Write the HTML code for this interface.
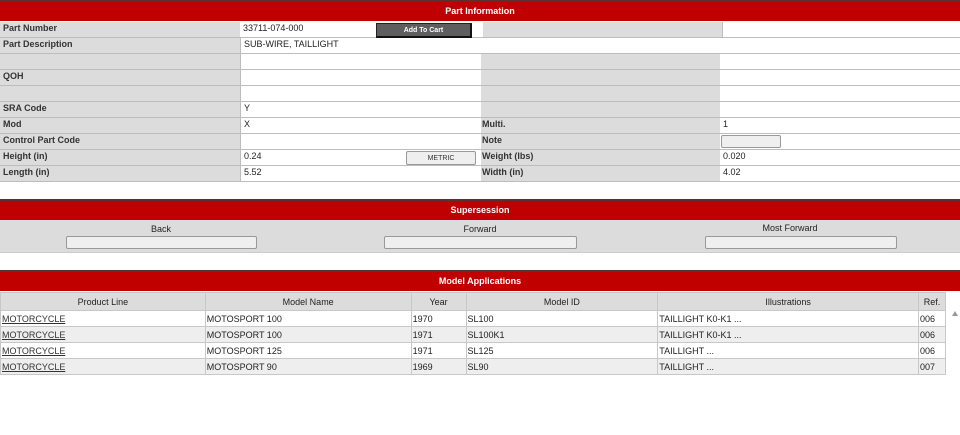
<!DOCTYPE html>
<html><head><style>
*{margin:0;padding:0;box-sizing:border-box}
body{width:960px;height:435px;background:#fff;font-family:"Liberation Sans",sans-serif;font-size:9px;color:#222;position:relative;overflow:hidden}
.a{position:absolute}
.hd{position:absolute;left:0;width:960px;height:21px;background:#c00000;border-top:2px solid #5a3030;color:#fff;font-weight:bold;text-align:center;font-size:9px;line-height:18px}
.g{background:#dcdcdc}
.w{background:#fff}
.c{position:absolute;height:16px;border-bottom:1px solid #bdbdbd;padding:1px 0 0 3px;line-height:10px}
.l{font-weight:bold;color:#333}
.btn{position:absolute;border:1px solid #999;border-radius:2px;background:#efefef;font-size:7px;text-align:center;line-height:13px;color:#333}
table{position:absolute;left:0;top:292px;border-collapse:collapse;width:946px;font-size:9px}
td,th{border:1px solid #c8c8c8;height:16px;padding:0 1px;text-align:left;font-weight:normal;color:#222;line-height:10px}
th{background:#dcdcdc;text-align:center;height:18px}
tr.e td{background:#eeeeee}
u{color:#333}
</style></head><body>
<div class="hd" style="top:0">Part Information</div>
<div class="c g l" style="left:0;top:22px;width:240px">Part Number</div>
<div class="c w" style="left:240px;top:22px;width:243px">33711-074-000</div>
<div class="a" style="left:376px;top:23px;width:96px;height:15px;background:#5e5e5e;border:1px solid #222;border-right:2px solid #111;border-bottom:2px solid #111;color:#fff;font-size:7px;text-align:center;line-height:14px;font-weight:bold">Add To Cart</div>
<div class="c g" style="left:483px;top:22px;width:239px"></div>
<div class="c w" style="left:722px;top:22px;width:238px;border-left:1px solid #bdbdbd"></div>
<div class="c g l" style="left:0;top:38px;width:240px">Part Description</div>
<div class="c w" style="left:240px;top:38px;width:720px;border-left:1px solid #bdbdbd">SUB-WIRE, TAILLIGHT</div>
<div class="c g l" style="left:0;top:54px;width:240px"></div>
<div class="c g l" style="left:0;top:70px;width:240px">QOH</div>
<div class="c g l" style="left:0;top:86px;width:240px"></div>
<div class="c g l" style="left:0;top:102px;width:240px">SRA Code</div>
<div class="c g l" style="left:0;top:118px;width:240px">Mod</div>
<div class="c g l" style="left:0;top:134px;width:240px">Control Part Code</div>
<div class="c g l" style="left:0;top:150px;width:240px">Height (in)</div>
<div class="c g l" style="left:0;top:166px;width:240px">Length (in)</div>
<div class="c w" style="left:240px;top:54px;width:241px;border-left:1px solid #bdbdbd"></div>
<div class="c w" style="left:240px;top:70px;width:241px;border-left:1px solid #bdbdbd"></div>
<div class="c w" style="left:240px;top:86px;width:241px;border-left:1px solid #bdbdbd"></div>
<div class="c w" style="left:240px;top:102px;width:241px;border-left:1px solid #bdbdbd">Y</div>
<div class="c w" style="left:240px;top:118px;width:241px;border-left:1px solid #bdbdbd">X</div>
<div class="c w" style="left:240px;top:134px;width:241px;border-left:1px solid #bdbdbd"></div>
<div class="c w" style="left:240px;top:150px;width:241px;border-left:1px solid #bdbdbd">0.24</div>
<div class="c w" style="left:240px;top:166px;width:241px;border-left:1px solid #bdbdbd">5.52</div>
<div class="btn" style="left:406px;top:151px;width:70px;height:14px">METRIC</div>
<div class="c g l" style="left:481px;top:54px;width:239px"></div>
<div class="c g l" style="left:481px;top:70px;width:239px"></div>
<div class="c g l" style="left:481px;top:86px;width:239px"></div>
<div class="c g l" style="left:481px;top:102px;width:239px"></div>
<div class="c g l" style="left:481px;top:118px;width:239px;padding-left:1px">Multi.</div>
<div class="c g l" style="left:481px;top:134px;width:239px;padding-left:1px">Note</div>
<div class="c g l" style="left:481px;top:150px;width:239px;padding-left:1px">Weight (lbs)</div>
<div class="c g l" style="left:481px;top:166px;width:239px;padding-left:1px">Width (in)</div>
<div class="c w" style="left:720px;top:54px;width:240px"></div>
<div class="c w" style="left:720px;top:70px;width:240px"></div>
<div class="c w" style="left:720px;top:86px;width:240px"></div>
<div class="c w" style="left:720px;top:102px;width:240px"></div>
<div class="c w" style="left:720px;top:118px;width:240px">1</div>
<div class="c w" style="left:720px;top:134px;width:240px"></div>
<div class="c w" style="left:720px;top:150px;width:240px">0.020</div>
<div class="c w" style="left:720px;top:166px;width:240px">4.02</div>
<div class="btn" style="left:721px;top:135px;width:60px;height:13px"></div>
<div class="hd" style="top:199px">Supersession</div>
<div class="a g" style="left:0;top:220px;width:960px;height:33px;border-bottom:1px solid #ccc"></div>
<div class="a" style="left:0;top:224px;width:322px;text-align:center">Back</div>
<div class="a" style="left:320px;top:224px;width:320px;text-align:center">Forward</div>
<div class="a" style="left:640px;top:223px;width:300px;text-align:center">Most Forward</div>
<div class="btn" style="left:66px;top:236px;width:191px;height:13px"></div>
<div class="btn" style="left:384px;top:236px;width:193px;height:13px"></div>
<div class="btn" style="left:705px;top:236px;width:192px;height:13px"></div>
<div class="hd" style="top:270px">Model Applications</div>
<table>
<tr><th style="width:205px">Product Line</th><th style="width:206px">Model Name</th><th style="width:55px">Year</th><th style="width:192px">Model ID</th><th style="width:261px">Illustrations</th><th style="width:27px">Ref.</th></tr>
<tr><td><u>MOTORCYCLE</u></td><td>MOTOSPORT 100</td><td>1970</td><td>SL100</td><td>TAILLIGHT K0-K1 ...</td><td>006</td></tr>
<tr class="e"><td><u>MOTORCYCLE</u></td><td>MOTOSPORT 100</td><td>1971</td><td>SL100K1</td><td>TAILLIGHT K0-K1 ...</td><td>006</td></tr>
<tr><td><u>MOTORCYCLE</u></td><td>MOTOSPORT 125</td><td>1971</td><td>SL125</td><td>TAILLIGHT ...</td><td>006</td></tr>
<tr class="e"><td><u>MOTORCYCLE</u></td><td>MOTOSPORT 90</td><td>1969</td><td>SL90</td><td>TAILLIGHT ...</td><td>007</td></tr>
</table>
<div class="a" style="left:952px;top:311px;width:0;height:0;border-left:3px solid transparent;border-right:3px solid transparent;border-bottom:5px solid #999"></div>
</body></html>
